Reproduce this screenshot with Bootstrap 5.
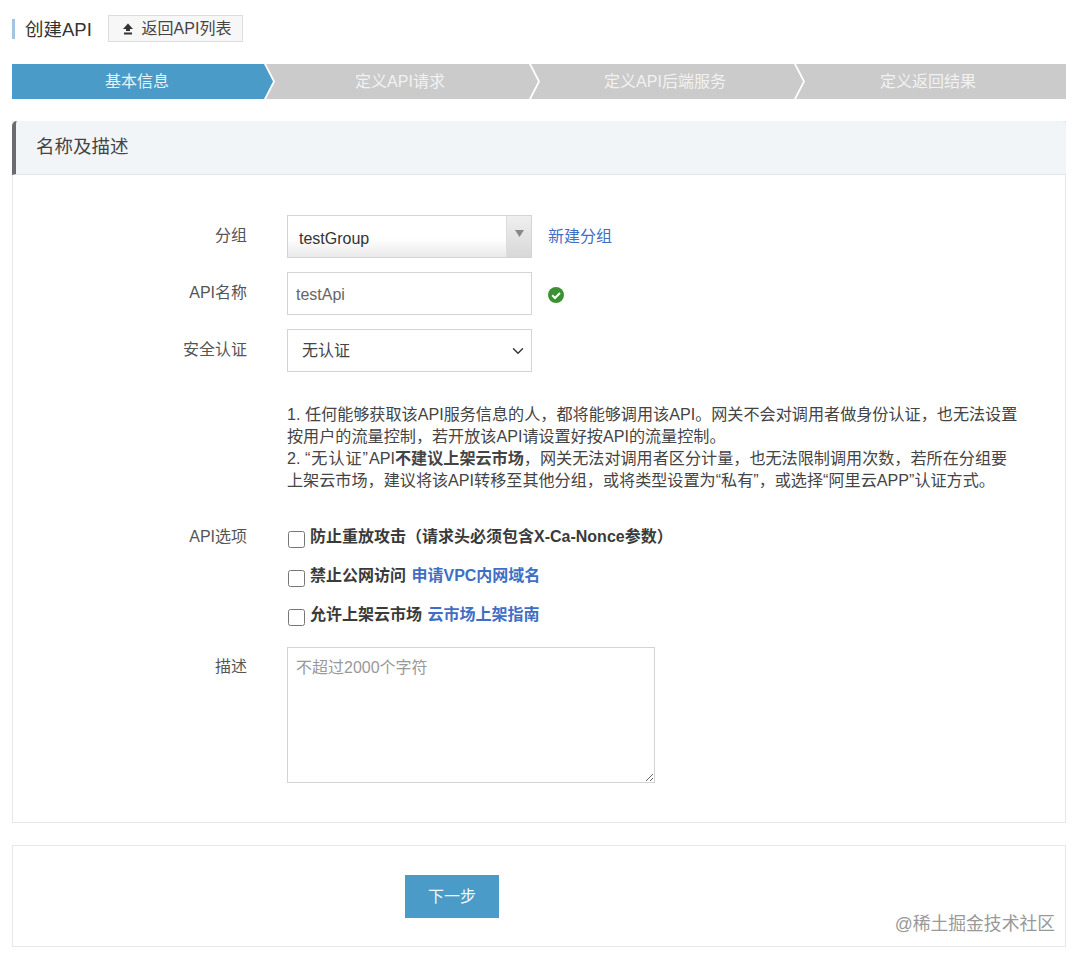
<!DOCTYPE html>
<html lang="zh-CN">
<head>
    <meta charset="UTF-8">
    <title>创建API</title>
    <link href="https://cdn.jsdelivr.net/npm/bootstrap@5.3.0/dist/css/bootstrap.min.css" rel="stylesheet">
    <style>
        body {
            font-family: "Liberation Sans", "Noto Sans CJK SC", sans-serif;
            font-size: 16px;
            color: #444;
            background: #fff;
        }

        .page-wrap {
            width: 1054px;
            margin-left: 12px;
            padding-top: 15px;
        }

        /* title row */
        .title-row {
            height: 27px;
        }

        .title-text {
            border-left: 3px solid #a3c4e4;
            height: 20px;
            line-height: 22px;
            padding-left: 10px;
            font-size: 18.5px;
            color: #333;
            width: 96px;
            white-space: nowrap;
        }

        .back-btn {
            width: 135px;
            height: 27px;
            border: 1px solid #ddd;
            border-radius: 0;
            background: #f7f7f7;
            color: #444;
            font-size: 16px;
            line-height: 25px;
            padding: 0 0 0 2px;
        }

        /* steps */
        .step-bar {
            margin-top: 22px;
            height: 35px;
        }

        .step-item {
            height: 35px;
            line-height: 36px;
            text-align: center;
            color: #f2f2f2;
            background: #cbcbcb;
            font-size: 16px;
            flex: 0 0 auto;
        }

        .step-first {
            width: 261px;
            background: #4a9bc7;
            color: #e8f4fa;
            padding-right: 11px;
            clip-path: polygon(0 0, 252px 0, 261px 17.5px, 252px 100%, 0 100%);
        }

        .step-mid {
            width: 272px;
            margin-left: -7px;
            padding-right: 4px;
            clip-path: polygon(0 0, 263px 0, 272px 17.5px, 263px 100%, 0 100%, 9px 17.5px);
        }

        .step-last {
            width: 270px;
            margin-left: -7px;
            padding-right: 6px;
            clip-path: polygon(0 0, 100% 0, 100% 100%, 0 100%, 9px 17.5px);
        }

        /* panels */
        .form-panel {
            margin-top: 22px;
            height: 702px;
            border: 1px solid #e6e8ea;
            border-radius: 0;
        }

        .panel-head {
            height: 54px;
            line-height: 51px;
            margin: -1px -1px 0;
            background: #f2f5f7;
            border-bottom: 1px solid #e3e6e8;
            border-left: 4px solid #6b6b70;
            border-radius: 0;
            padding: 0 0 0 20px;
            font-size: 18.5px;
            color: #444;
        }

        .panel-body {
            padding: 40px 0 0;
        }

        .field-row {
            margin-bottom: 14px;
        }

        .field-label {
            width: 234px;
            margin-right: 40px;
            flex: 0 0 auto;
            text-align: right;
            font-size: 16px;
            line-height: 41px;
            color: #555;
        }

        .box-select {
            width: 245px;
            height: 43px;
            border: 1px solid #d4d4d4;
            background: linear-gradient(#fff 55%, #e9e9e9);
            font-size: 16px;
            color: #333;
        }

        .box-select-text {
            padding: 0 0 0 11px;
            line-height: 41px;
            padding-top: 2px;
        }

        .box-select-arrow {
            width: 25px;
            background: linear-gradient(#efefef, #d8d8d8);
            border-left: 1px solid #ddd;
            padding-top: 14px;
        }

        .box-input {
            width: 245px;
            height: 43px;
            border: 1px solid #d4d4d4;
            border-radius: 0;
            font-size: 16px;
            color: #666;
            padding: 2px 8px 0;
            box-shadow: none;
        }

        .box-drop {
            width: 245px;
            height: 43px;
            border: 1px solid #d4d4d4;
            border-radius: 0;
            font-size: 16px;
            color: #444;
            padding: 0 14px;
            background-position: right 5px center;
        }

        .add-link {
            color: #3f6fc4;
            font-size: 16px;
            text-decoration: none;
            margin-left: 16px;
            line-height: 43px;
        }

        .ok-icon {
            margin-left: 16px;
            margin-top: 15px;
        }

        .tip-text {
            margin: 31px 0 0 274px;
            width: 733px;
            font-size: 16.13px;
            line-height: 22px;
            color: #444;
        }

        .quote-wide {
            letter-spacing: 1px;
        }

        .option-group {
            margin-top: 34px;
        }

        .option-row {
            height: 39px;
            font-weight: 700;
            font-size: 16px;
            color: #3a3a3a;
        }

        .option-label {
            line-height: 24px;
        }

        .opt-check {
            width: 17px;
            height: 17px;
            margin: 6px 5px 0 1px;
            border: 1px solid #777;
            border-radius: 3px;
        }

        .opt-link {
            color: #3f6fc4;
            text-decoration: none;
            margin-left: 1px;
        }

        .option-wrap .field-label {
            line-height: 24px;
        }

        .desc-row {
            margin-top: 5px;
        }

        .desc-row .field-label {
            line-height: 40px;
        }

        .desc-box {
            width: 368px;
            height: 136px;
            border: 1px solid #d4d4d4;
            border-radius: 0;
            padding: 8px 8px;
            font-size: 16px;
            resize: both;
            box-shadow: none;
        }

        .desc-box::placeholder {
            color: #999;
        }

        .foot-panel {
            margin-top: 22px;
            height: 102px;
            border: 1px solid #e6e8ea;
            border-radius: 0;
        }

        .next-btn {
            margin: 29px 0 0 392px;
            width: 94px;
            height: 43px;
            border-radius: 0;
            border: 0;
            background: #4a9bc7;
            color: #f2f9fd;
            font-size: 16px;
        }

        .mark-text {
            position: absolute;
            right: 10px;
            bottom: 10px;
            font-size: 17.8px;
            line-height: 24px;
            color: #999;
        }
    </style>
</head>

<body>
    <div class="page-wrap">

        <div class="title-row d-flex align-items-center">
            <div class="title-text">创建API</div>
            <button type="button" class="btn back-btn d-flex align-items-center justify-content-center gap-2">
                <svg width="12" height="12" viewBox="0 0 12 12"><path d="M6 0.500 11 6H8V8H4V6H1z M2 9.500h8V11.500H2z" fill="#333"/></svg>
                <span>返回API列表</span>
            </button>
        </div>

        <div class="step-bar d-flex">
            <div class="step-item step-first">基本信息</div>
            <div class="step-item step-mid">定义API请求</div>
            <div class="step-item step-mid">定义API后端服务</div>
            <div class="step-item step-last">定义返回结果</div>
        </div>

        <div class="card form-panel">
            <div class="card-header panel-head">名称及描述</div>
            <div class="panel-body">

                <div class="field-row d-flex">
                    <div class="field-label">分组</div>
                    <div class="box-select d-flex justify-content-between">
                        <div class="box-select-text">testGroup</div>
                        <div class="box-select-arrow d-flex justify-content-center">
                            <svg width="9" height="7" viewBox="0 0 9 7"><path d="M0 0h9L4.500 7z" fill="#888"/></svg>
                        </div>
                    </div>
                    <a href="#" class="add-link">新建分组</a>
                </div>

                <div class="field-row d-flex">
                    <div class="field-label">API名称</div>
                    <input type="text" class="form-control box-input" value="testApi">
                    <svg class="ok-icon" width="16" height="16" viewBox="0 0 16 16">
                        <circle cx="8" cy="8" r="8" fill="#3c9232"/>
                        <path d="M4.200 8.200 7 11l5-5" fill="none" stroke="#fff" stroke-width="2"/>
                    </svg>
                </div>

                <div class="field-row d-flex">
                    <div class="field-label">安全认证</div>
                    <select class="form-select box-drop">
                        <option>无认证</option>
                    </select>
                </div>

                <div class="tip-text">
                    1. 任何能够获取该API服务信息的人，都将能够调用该API。网关不会对调用者做身份认证，也无法设置按用户的流量控制，若开放该API请设置好按API的流量控制。<br>
                    2. <span class="quote-wide">“无认证”</span>API<b>不建议上架云市场</b>，网关无法对调用者区分计量，也无法限制调用次数，若所在分组要上架云市场，建议将该API转移至其他分组，或将类型设置为“私有”，或选择“阿里云APP”认证方式。
                </div>

                <div class="option-group option-wrap d-flex">
                    <div class="field-label">API选项</div>
                    <div>
                        <div class="option-row d-flex">
                            <input type="checkbox" class="opt-check">
                            <div class="option-label">防止重放攻击（请求头必须包含X-Ca-Nonce参数）</div>
                        </div>
                        <div class="option-row d-flex">
                            <input type="checkbox" class="opt-check">
                            <div class="option-label">禁止公网访问 <a href="#" class="opt-link">申请VPC内网域名</a></div>
                        </div>
                        <div class="option-row d-flex">
                            <input type="checkbox" class="opt-check">
                            <div class="option-label">允许上架云市场 <a href="#" class="opt-link">云市场上架指南</a></div>
                        </div>
                    </div>
                </div>

                <div class="desc-row d-flex">
                    <div class="field-label">描述</div>
                    <textarea class="form-control desc-box" placeholder="不超过2000个字符"></textarea>
                </div>

            </div>
        </div>

        <div class="card foot-panel">
            <div><button type="button" class="btn next-btn">下一步</button></div>
            <div class="mark-text">@稀土掘金技术社区</div>
        </div>

    </div>

    <script src="https://cdn.jsdelivr.net/npm/bootstrap@5.3.0/dist/js/bootstrap.bundle.min.js"></script>
</body>

</html>
